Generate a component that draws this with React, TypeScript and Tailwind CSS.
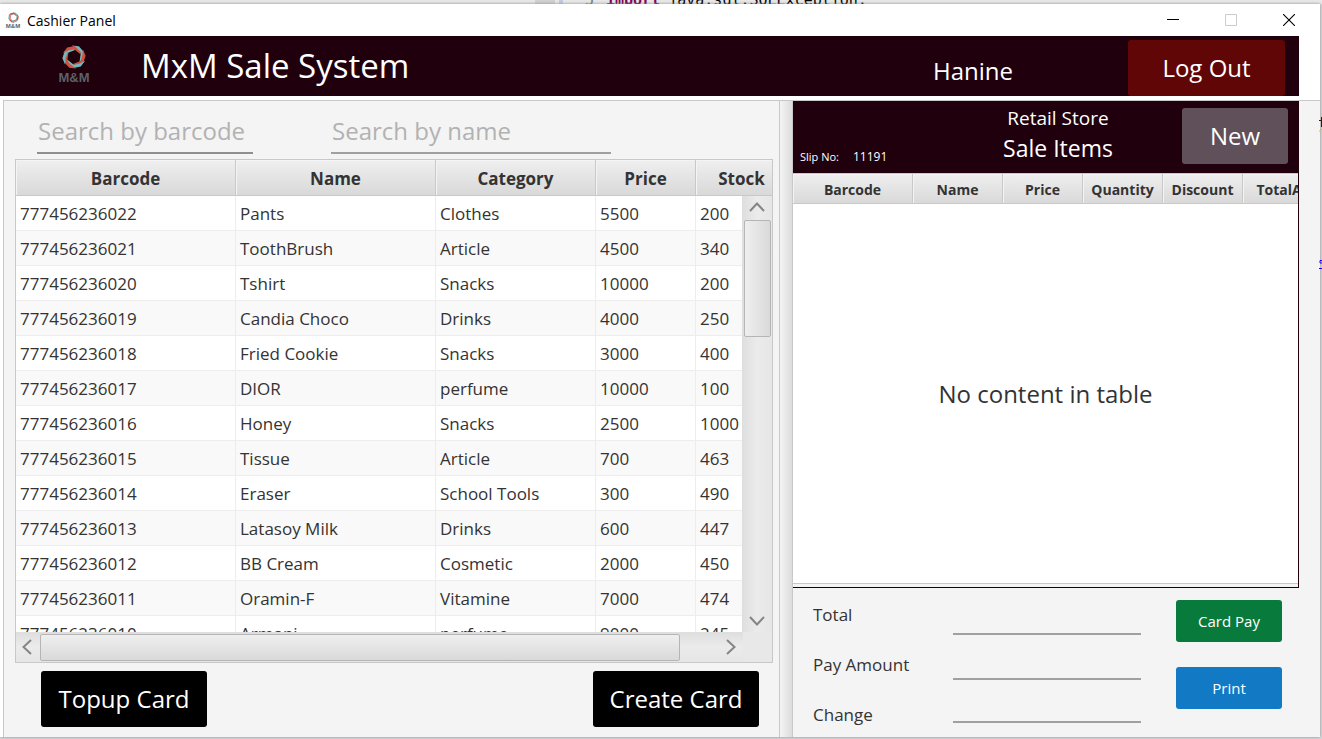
import React from "react";

const products = [
  ["777456236022", "Pants", "Clothes", "5500", "200"],
  ["777456236021", "ToothBrush", "Article", "4500", "340"],
  ["777456236020", "Tshirt", "Snacks", "10000", "200"],
  ["777456236019", "Candia Choco", "Drinks", "4000", "250"],
  ["777456236018", "Fried Cookie", "Snacks", "3000", "400"],
  ["777456236017", "DIOR", "perfume", "10000", "100"],
  ["777456236016", "Honey", "Snacks", "2500", "1000"],
  ["777456236015", "Tissue", "Article", "700", "463"],
  ["777456236014", "Eraser", "School Tools", "300", "490"],
  ["777456236013", "Latasoy Milk", "Drinks", "600", "447"],
  ["777456236012", "BB Cream", "Cosmetic", "2000", "450"],
  ["777456236011", "Oramin-F", "Vitamine", "7000", "474"],
  ["777456236010", "Armani", "perfume", "9000", "245"],
];

function Ring({ className }: { className: string }) {
  return (
    <svg viewBox="-12 -12 24 24" className={className} fill="none" aria-hidden="true">
      {[12, 72, 132, 192, 252, 312].map((angle, i) => (
        <path
          key={angle}
          d="M-4.6 -10.8L2.5 -11.4L8.6 -7L8.2 1.2L6.4 3.8L5.9 -5L1.4 -8.4Z"
          fill={i % 2 === 0 ? "#6fb9bd" : "#d2503f"}
          transform={`rotate(${angle})`}
        />
      ))}
    </svg>
  );
}

type Direction = "up" | "down" | "left" | "right";
const chevrons: Record<Direction, string> = {
  up: "M2 12L9 4.5L16 12",
  down: "M2 6L9 13.5L16 6",
  left: "M12 2L4.5 9L12 16",
  right: "M5 2L12.5 9L5 16",
};

function ScrollButton({ direction, className }: { direction: Direction; className: string }) {
  return (
    <button type="button" aria-label={`Scroll ${direction}`} className={`flex shrink-0 items-center justify-center ${className}`}>
      <svg viewBox="0 0 18 18" className="size-[18px]" fill="none" stroke="#858585" strokeWidth="2" aria-hidden="true">
        <path d={chevrons[direction]} />
      </svg>
    </button>
  );
}

function ProductTable() {
  return (
    <div className="ml-[11px] mr-1.5 grid min-h-0 flex-1 grid-cols-[1fr_29px] grid-rows-[36px_1fr_30px] border border-[#c8c8c8] bg-white">
      <div className="col-span-2 col-start-1 row-span-2 row-start-1 min-h-0 min-w-0 overflow-hidden">
        <table className="w-[772px] table-fixed border-separate border-spacing-0 text-[17px] text-[#333333]">
          <colgroup>
            <col className="w-[220px]" />
            <col className="w-[200px]" />
            <col className="w-[160px]" />
            <col className="w-[100px]" />
            <col className="w-[92px]" />
          </colgroup>
          <thead>
            <tr className="h-9">
              {["Barcode", "Name", "Category", "Price", "Stock"].map((h) => (
                <th key={h} className="border-r border-b border-[#c8c8c8] bg-linear-to-b from-[#efefef] to-[#d9d9d9] p-0 pt-0.5 text-center font-bold shadow-[inset_1px_1px_0_#f4f4f4]">
                  {h}
                </th>
              ))}
            </tr>
          </thead>
          <tbody>
            {products.map((row) => (
              <tr key={row[0]} className="h-[35px] odd:bg-white even:bg-[#f9f9f9]">
                {row.map((cell, i) => (
                  <td key={i} className="border-r border-b border-[#ededed] p-0 pt-0.5 pl-1 whitespace-nowrap">
                    {cell}
                  </td>
                ))}
              </tr>
            ))}
          </tbody>
        </table>
      </div>
      <div className="z-10 col-start-2 row-start-2 -ml-px flex min-h-0 flex-col items-center bg-linear-to-r from-[#dedede] via-[#ebebeb] to-[#e6e6e6]">
        <ScrollButton direction="up" className="h-6 w-full" />
        <div className="h-[117px] w-[27px] shrink-0 rounded-xs border border-[#b5b5b5] bg-linear-to-r from-[#efefef] to-[#d9d9d9]" />
        <ScrollButton direction="down" className="mt-auto h-6 w-full" />
      </div>
      <div className="col-start-1 row-start-3 flex min-w-0 items-center bg-linear-to-b from-[#dedede] via-[#ebebeb] to-[#e6e6e6]">
        <ScrollButton direction="left" className="h-full w-6" />
        <div className="h-[27px] w-[640px] shrink rounded-xs border border-[#b5b5b5] bg-linear-to-b from-[#efefef] to-[#d9d9d9]" />
        <ScrollButton direction="right" className="ml-auto h-full w-6" />
      </div>
      <div className="col-start-2 row-start-3 bg-[#e8e8e8]" />
    </div>
  );
}

function SaleTable() {
  return (
    <div className="flex min-h-0 flex-1 flex-col overflow-hidden border-b border-[#c8c8c8] bg-white">
      <table className="w-[570px] table-fixed border-separate border-spacing-0 text-[14px] text-[#333333]">
        <colgroup>
          <col className="w-[120px]" />
          <col className="w-[90px]" />
          <col className="w-[80px]" />
          <col className="w-[80px]" />
          <col className="w-[80px]" />
          <col className="w-[120px]" />
        </colgroup>
        <thead>
          <tr className="h-[31px]">
            {["Barcode", "Name", "Price", "Quantity", "Discount", "TotalAmount"].map((h) => (
              <th key={h} className="border-t border-r border-b border-[#c8c8c8] bg-linear-to-b from-[#efefef] to-[#d9d9d9] p-0 pt-0.5 text-center font-bold shadow-[inset_1px_1px_0_#f4f4f4]">
                {h}
              </th>
            ))}
          </tr>
        </thead>
      </table>
      <div className="flex flex-1 items-center justify-center text-2xl text-[#333333]">No content in table</div>
    </div>
  );
}

export default function App() {
  return (
    <div className="relative flex h-screen flex-col overflow-hidden bg-[#d9d9dc] font-['Open_Sans','Noto_Sans',sans-serif]">
      <div className="flex h-1 shrink-0 items-start overflow-hidden bg-[#e8e8e8] pl-[535px] font-['DejaVu_Sans_Mono',monospace] text-[15px] leading-[0px] whitespace-pre">
        <span className="h-1 w-5 bg-[#d2d2d2]" />
        <span className="ml-1 h-1 w-1 bg-[#c3cbe0]" />
        <span className="ml-[22px] text-[#787878]">5</span>
        <span className="ml-3 font-bold text-[#7f0055]">import</span>
        <span className="ml-2 text-black">java.sql.SQLException;</span>
      </div>

      <div className="mr-0.5 mb-0.5 flex min-h-0 flex-1 flex-col bg-white shadow-[0_0_3px_#888888]">
        <div className="flex h-8 shrink-0 items-center pl-1.5">
          <div className="flex w-3.5 flex-col items-center">
            <Ring className="size-[11px]" />
            <span className="font-['Liberation_Sans',sans-serif] text-[6px] leading-[6px] font-bold text-[#5c6168]">M&amp;M</span>
          </div>
          <h1 className="ml-[7px] pt-0.5 text-sm text-black">Cashier Panel</h1>
          <div className="mr-[25px] ml-auto flex items-center gap-[46px]">
            <button type="button" aria-label="Minimize">
              <svg viewBox="0 0 12 12" className="size-3" stroke="#000000" aria-hidden="true"><path d="M0 5.5H12" /></svg>
            </button>
            <button type="button" aria-label="Maximize">
              <svg viewBox="0 0 12 12" className="size-3" fill="none" stroke="#cccccc" aria-hidden="true"><path d="M.5 .5H11.5V11.5H.5Z" /></svg>
            </button>
            <button type="button" aria-label="Close">
              <svg viewBox="0 0 12 12" className="size-3" stroke="#000000" strokeWidth="1.1" aria-hidden="true"><path d="M0 0L12 12M12 0L0 12" /></svg>
            </button>
          </div>
        </div>

        <header className="mr-[21px] flex h-15 shrink-0 items-center bg-[#21000d] pl-[59px] text-white">
          <div className="flex w-[30px] flex-col items-center">
            <Ring className="size-6" />
            <span className="font-['Liberation_Sans',sans-serif] text-[13px] leading-[18px] font-bold text-[#5c6168]">M&amp;M</span>
          </div>
          <h2 className="ml-[52px] text-[33px]">MxM Sale System</h2>
          <span className="mt-2.5 mr-[115px] ml-auto text-2xl">Hanine</span>
          <button type="button" className="mr-3.5 h-14 w-[157px] self-end rounded-[3px] bg-[#600606] text-2xl">Log Out</button>
        </header>

        <main className="mt-1 ml-[3px] flex min-h-0 flex-1 border-t border-l border-[#c8c8c8] bg-[#f4f4f4]">
          <section className="flex min-w-0 flex-1 flex-col">
            <div className="flex h-[58px] shrink-0 gap-[78px] pb-[5px] pl-[33px]">
              <input aria-label="Search by barcode" placeholder="Search by barcode" className="w-54 border-b-2 border-[#8f8f8f] bg-transparent px-px pt-[9px] pb-0 text-2xl outline-none placeholder:text-[#b2b2b2]" />
              <input aria-label="Search by name" placeholder="Search by name" className="w-70 border-b-2 border-[#a0a0a0] bg-transparent px-px pt-[9px] pb-0 text-2xl outline-none placeholder:text-[#b2b2b2]" />
            </div>
            <ProductTable />
            <div className="flex shrink-0 justify-between pt-2 pr-5 pb-2.5 pl-[37px] text-2xl text-white">
              <button type="button" className="h-14 w-[166px] rounded-[3px] bg-black">Topup Card</button>
              <button type="button" className="h-14 w-[166px] rounded-[3px] bg-black">Create Card</button>
            </div>
          </section>

          <div className="w-3.5 shrink-0 border-x border-[#c8c8c8] bg-linear-to-r from-[#f4f4f4] to-[#dcdcdc]" />

          <section className="flex w-[527px] shrink-0 flex-col pr-[21px]">
            <div className="flex min-h-0 flex-1 flex-col border-r border-b border-[#21000d]">
              <div className="grid h-18 shrink-0 grid-cols-[141px_1fr_116px] bg-[#21000d] text-white">
                <div className="flex items-center gap-3.5 self-end pb-2 pl-[7px] text-xs leading-4">
                  <span className="text-[11px]">Slip No:</span>
                  <span>11191</span>
                </div>
                <div className="flex flex-col items-center pt-1 text-center">
                  <span className="text-[19px] leading-[26px]">Retail Store</span>
                  <span className="text-[23px] leading-[34px]">Sale Items</span>
                </div>
                <button type="button" className="mt-[7px] h-14 w-[106px] rounded-[3px] bg-[#60505a] text-2xl">New</button>
              </div>
              <SaleTable />
              <div className="h-[3px] shrink-0" />
            </div>

            <div className="flex h-[149px] shrink-0 pr-[17px] pl-5 text-[17px] text-[#333333]">
              <div className="flex w-35 flex-col pt-0.5">
                <label htmlFor="total" className="h-[50px] leading-[50px]">Total</label>
                <label htmlFor="pay" className="h-[50px] leading-[50px]">Pay Amount</label>
                <label htmlFor="change" className="h-[47px] leading-[50px]">Change</label>
              </div>
              <div className="flex w-[188px] flex-col pt-0.5">
                <input id="total" className="h-[45px] w-full border-b-2 border-[#a0a0a0] bg-transparent outline-none" />
                <input id="pay" className="h-[45px] w-full border-b-2 border-[#a0a0a0] bg-transparent outline-none" />
                <input id="change" className="h-[43px] w-full border-b-2 border-[#a0a0a0] bg-transparent outline-none" />
              </div>
              <div className="ml-auto flex w-[106px] flex-col gap-[25px] pt-3 text-[15px] text-white">
                <button type="button" className="h-[42px] rounded-[3px] bg-[#087a3c]">Card Pay</button>
                <button type="button" className="h-[42px] rounded-[3px] bg-[#1279c4]">Print</button>
              </div>
            </div>
          </section>
        </main>
      </div>

      <svg viewBox="0 0 3 160" className="absolute top-[114px] right-0 h-40 w-[3px]" fill="none" aria-hidden="true">
        <path d="M0 6.5H3M2.5 3V13" stroke="#2b1a10" />
        <path d="M0 17.5L3 15" stroke="#d8b94a" />
        <path d="M3 146.5H1V149H3M0 154.5H3" stroke="#2a00ff" />
      </svg>
    </div>
  );
}
